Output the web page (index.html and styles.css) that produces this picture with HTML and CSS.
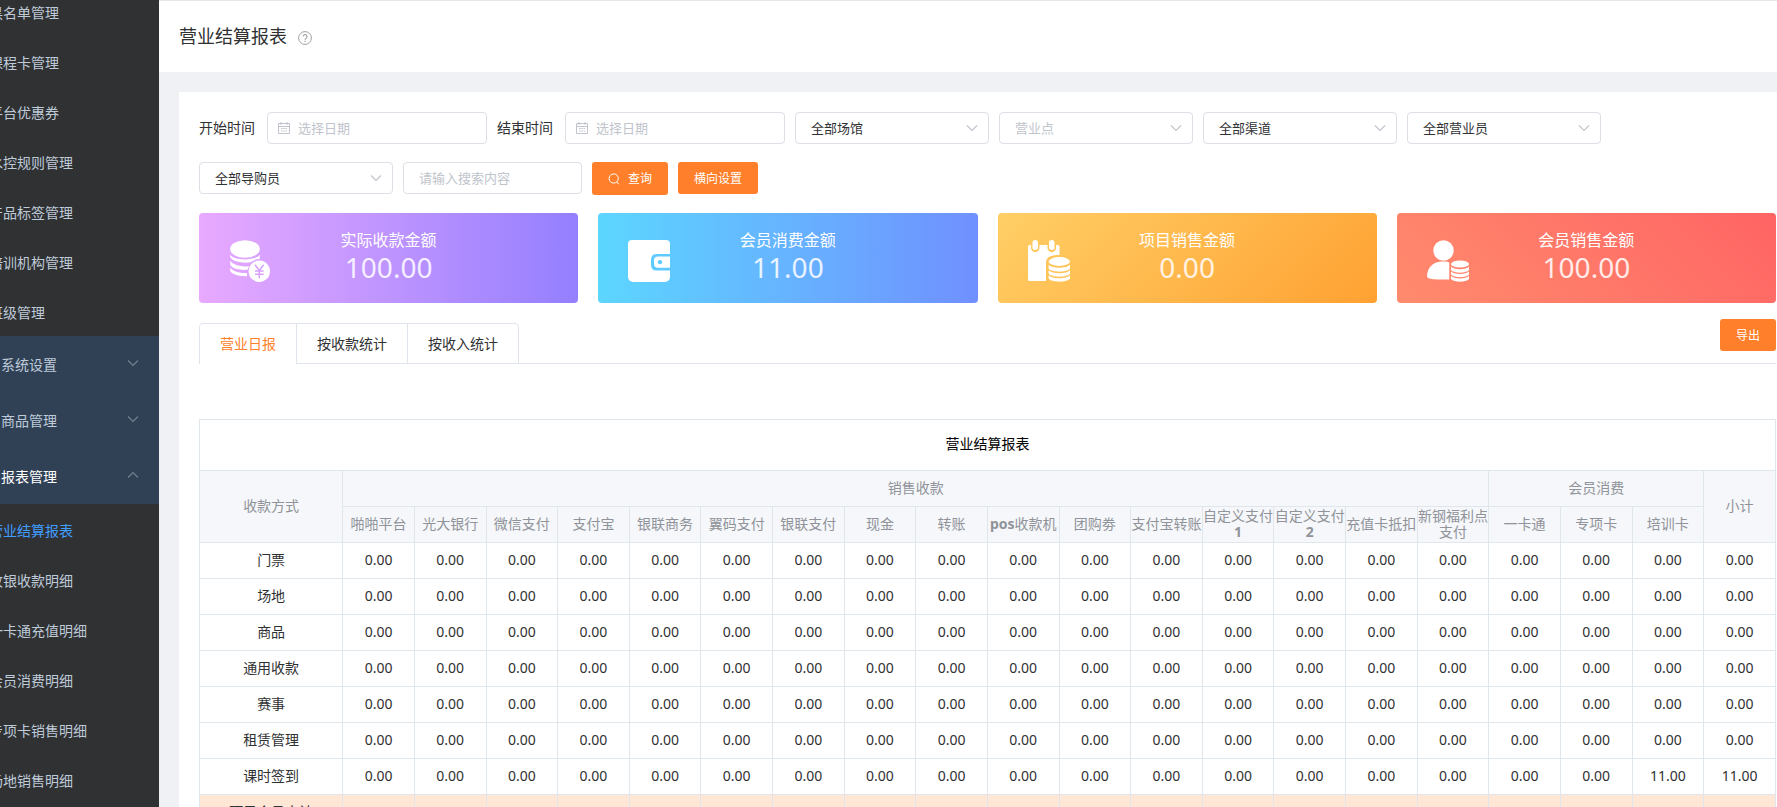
FILE: index.html
```html
<!DOCTYPE html>
<html lang="zh-CN">
<head>
<meta charset="utf-8">
<title>营业结算报表</title>
<link rel="stylesheet" href="styles.css">
</head>
<body>
<svg class="defs" aria-hidden="true">
  <symbol id="chevron" viewBox="0 0 14 14"><path d="M2 4.5l5 5 5-5" fill="none" stroke="currentColor" stroke-width="1.1"/></symbol>
  <symbol id="calendar" viewBox="0 0 14 14"><path d="M1.5 2.5h11v10h-11zM1.5 5.5h11M4 1v3M10 1v3M4 7.5h1.5M6.3 7.5h1.5M8.6 7.5h1.5M4 10h1.5M6.3 10h1.5M8.6 10h1.5" fill="none" stroke="currentColor"/></symbol>
</svg>
<div class="app">
  <nav class="sidebar">
    <ul class="menu">
      <li><a class="sub" href="#">黑名单管理</a></li>
      <li><a class="sub" href="#">课程卡管理</a></li>
      <li><a class="sub" href="#">平台优惠券</a></li>
      <li><a class="sub" href="#">水控规则管理</a></li>
      <li><a class="sub" href="#">产品标签管理</a></li>
      <li><a class="sub" href="#">培训机构管理</a></li>
      <li><a class="sub" href="#">班级管理</a></li>
      <li><button type="button" class="group"><span>系统设置</span><svg><use href="#chevron"/></svg></button></li>
      <li><button type="button" class="group"><span>商品管理</span><svg><use href="#chevron"/></svg></button></li>
      <li><button type="button" class="group open"><span>报表管理</span><svg><use href="#chevron"/></svg></button></li>
      <li><a class="sub active" href="#">营业结算报表</a></li>
      <li><a class="sub" href="#">收银收款明细</a></li>
      <li><a class="sub" href="#">一卡通充值明细</a></li>
      <li><a class="sub" href="#">会员消费明细</a></li>
      <li><a class="sub" href="#">专项卡销售明细</a></li>
      <li><a class="sub" href="#">场地销售明细</a></li>
    </ul>
  </nav>
  <main class="main">
    <header class="page-head">
      <h1>营业结算报表</h1>
      <svg class="help" viewBox="0 0 14 14"><circle cx="7" cy="7" r="6.4" fill="none" stroke="currentColor"/><path d="M5 5.6a2 2 0 1 1 3.2 1.6c-.8.5-1.2.8-1.2 1.6M7 9.8v1.1" fill="none" stroke="currentColor" stroke-width="1.1"/></svg>
    </header>
    <section class="panel">
      <form class="filters">
        <div class="date-field">
          <label for="start">开始时间</label>
          <div class="control date"><svg><use href="#calendar"/></svg><input id="start" type="text" placeholder="选择日期"></div>
        </div>
        <div class="date-field">
          <label for="end">结束时间</label>
          <div class="control date"><svg><use href="#calendar"/></svg><input id="end" type="text" placeholder="选择日期"></div>
        </div>
        <div class="control pick"><select aria-label="场馆"><option>全部场馆</option></select><svg><use href="#chevron"/></svg></div>
        <div class="control pick empty"><select aria-label="营业点"><option>营业点</option></select><svg><use href="#chevron"/></svg></div>
        <div class="control pick"><select aria-label="渠道"><option>全部渠道</option></select><svg><use href="#chevron"/></svg></div>
        <div class="control pick"><select aria-label="营业员"><option>全部营业员</option></select><svg><use href="#chevron"/></svg></div>
        <div class="control pick"><select aria-label="导购员"><option>全部导购员</option></select><svg><use href="#chevron"/></svg></div>
        <div class="control search"><input type="text" aria-label="搜索内容" placeholder="请输入搜索内容"></div>
        <button type="button" class="btn query"><svg viewBox="0 0 12 12"><circle cx="5.7" cy="5.5" r="4.6" fill="none" stroke="currentColor"/><path d="M8.8 9l2 2.3" stroke="currentColor"/></svg>查询</button>
        <button type="button" class="btn">横向设置</button>
      </form>

      <div class="stats">
        <article class="stat violet">
          <svg viewBox="0 0 42 42"><g fill="currentColor"><ellipse cx="16" cy="9" rx="14.8" ry="8.8"/><path d="M1.2 14.5c3 6.5 26.6 6.5 29.6 0v4.2c-3.5.3-6.5 1.600-9 3.600-9 1.200-18.500-.8-20.600-5.300z"/><path d="M1.200 20.800c3 4.300 11 6.200 18.800 5.400l-1.500 3.600c-9 .5-16-1.500-17.300-5.300z"/><path d="M1.200 27.800c3 3.900 9.500 5.500 16.700 5.200l.2 3.200c-9 .3-16.200-2.200-16.900-5.400z"/><circle cx="30.300" cy="31.300" r="10.700"/></g><path d="M26 24.800l4.300 5.700 4.300-5.700M30.300 30.500v7.800M26 31h8.600M26 34.300h8.600" fill="none" stroke="#d8a0ff" stroke-width="1.500"/></svg>
          <h2>实际收款金额</h2><p>100.00</p>
        </article>
        <article class="stat blue">
          <svg viewBox="0 0 42 42"><path fill="currentColor" d="M4 0h34a4 4 0 0 1 4 4v10H28.500q-5.500 0-5.500 6v5q0 5.500 5.500 5.500H42V37a5 5 0 0 1-5 5H5a5 5 0 0 1-5-5V4a4 4 0 0 1 4-4zM42 16.500v11.200H30q-4 0-4-4v-3.200q0-4 4-4zM32 19.900a2.200 2.200 0 1 0 .01 0z" fill-rule="evenodd"/></svg>
          <h2>会员消费金额</h2><p>11.00</p>
        </article>
        <article class="stat amber">
          <svg viewBox="0 0 42 42"><g fill="currentColor"><rect x="4.500" width="5.500" height="10" rx="2.700"/><rect x="21" width="5.500" height="10" rx="2.700"/><path d="M1.500 5H3v3c0 5.500 8.500 5.500 8.500 0V5h8v3c0 5.500 8.500 5.500 8.500 0V5h2q1.500 0 1.500 1.500V15c-9 0-13.500 2-13.500 8v18H1.500Q0 41 0 39.500v-33Q0 5 1.500 5z"/><ellipse cx="31.300" cy="21.500" rx="10.700" ry="4.400"/><path d="M20.600 24.500c3 4.300 18.400 4.300 21.400 0v4c-3 4.200-18.400 4.200-21.400 0zM20.600 30c3 4.300 18.400 4.300 21.400 0v3.500c-3 4.200-18.400 4.200-21.400 0zM20.600 35c3 4.300 18.400 4.300 21.400 0v3.500c-3 4.200-18.400 4.200-21.400 0z"/></g></svg>
          <h2>项目销售金额</h2><p>0.00</p>
        </article>
        <article class="stat coral">
          <svg viewBox="0 0 42 42"><g fill="currentColor"><circle cx="16.500" cy="10.500" r="10.200"/><path d="M22.300 22.500v17H12Q0 39.500 0 36.500C0 28 6 21.800 14 21.500h5.500z"/><ellipse cx="33" cy="24" rx="9" ry="3.600"/><path d="M24 26.600c3 3.500 15 3.500 18 0v3.400c-3 3.500-15 3.500-18 0zM24 31.300c3 3.500 15 3.500 18 0v3.200c-3 3.500-15 3.500-18 0zM24 35.800c3 3.500 15 3.500 18 0v3.200c-3 3.500-15 3.500-18 0z"/></g></svg>
          <h2>会员销售金额</h2><p>100.00</p>
        </article>
      </div>

      <div class="tab-bar">
        <div class="tabs" role="tablist">
          <button type="button" role="tab" class="tab current" aria-selected="true">营业日报</button>
          <button type="button" role="tab" class="tab">按收款统计</button>
          <button type="button" role="tab" class="tab">按收入统计</button>
        </div>
        <button type="button" class="btn">导出</button>
      </div>

      <table class="report">
        <colgroup><col class="col-name"><col span="20"></colgroup>
        <thead>
          <tr class="title"><td colspan="21">营业结算报表</td></tr>
          <tr><th rowspan="2">收款方式</th><th colspan="16">销售收款</th><th colspan="3">会员消费</th><th rowspan="2">小计</th></tr>
          <tr><th>啪啪平台</th><th>光大银行</th><th>微信支付</th><th>支付宝</th><th>银联商务</th><th>翼码支付</th><th>银联支付</th><th>现金</th><th>转账</th><th><b>pos</b>收款机</th><th>团购劵</th><th>支付宝转账</th><th>自定义支付<b>1</b></th><th>自定义支付<b>2</b></th><th>充值卡抵扣</th><th>新钢福利点支付</th><th>一卡通</th><th>专项卡</th><th>培训卡</th></tr>
        </thead>
        <tbody>
          <tr><td>门票</td><td>0.00</td><td>0.00</td><td>0.00</td><td>0.00</td><td>0.00</td><td>0.00</td><td>0.00</td><td>0.00</td><td>0.00</td><td>0.00</td><td>0.00</td><td>0.00</td><td>0.00</td><td>0.00</td><td>0.00</td><td>0.00</td><td>0.00</td><td>0.00</td><td>0.00</td><td>0.00</td></tr>
          <tr><td>场地</td><td>0.00</td><td>0.00</td><td>0.00</td><td>0.00</td><td>0.00</td><td>0.00</td><td>0.00</td><td>0.00</td><td>0.00</td><td>0.00</td><td>0.00</td><td>0.00</td><td>0.00</td><td>0.00</td><td>0.00</td><td>0.00</td><td>0.00</td><td>0.00</td><td>0.00</td><td>0.00</td></tr>
          <tr><td>商品</td><td>0.00</td><td>0.00</td><td>0.00</td><td>0.00</td><td>0.00</td><td>0.00</td><td>0.00</td><td>0.00</td><td>0.00</td><td>0.00</td><td>0.00</td><td>0.00</td><td>0.00</td><td>0.00</td><td>0.00</td><td>0.00</td><td>0.00</td><td>0.00</td><td>0.00</td><td>0.00</td></tr>
          <tr><td>通用收款</td><td>0.00</td><td>0.00</td><td>0.00</td><td>0.00</td><td>0.00</td><td>0.00</td><td>0.00</td><td>0.00</td><td>0.00</td><td>0.00</td><td>0.00</td><td>0.00</td><td>0.00</td><td>0.00</td><td>0.00</td><td>0.00</td><td>0.00</td><td>0.00</td><td>0.00</td><td>0.00</td></tr>
          <tr><td>赛事</td><td>0.00</td><td>0.00</td><td>0.00</td><td>0.00</td><td>0.00</td><td>0.00</td><td>0.00</td><td>0.00</td><td>0.00</td><td>0.00</td><td>0.00</td><td>0.00</td><td>0.00</td><td>0.00</td><td>0.00</td><td>0.00</td><td>0.00</td><td>0.00</td><td>0.00</td><td>0.00</td></tr>
          <tr><td>租赁管理</td><td>0.00</td><td>0.00</td><td>0.00</td><td>0.00</td><td>0.00</td><td>0.00</td><td>0.00</td><td>0.00</td><td>0.00</td><td>0.00</td><td>0.00</td><td>0.00</td><td>0.00</td><td>0.00</td><td>0.00</td><td>0.00</td><td>0.00</td><td>0.00</td><td>0.00</td><td>0.00</td></tr>
          <tr><td>课时签到</td><td>0.00</td><td>0.00</td><td>0.00</td><td>0.00</td><td>0.00</td><td>0.00</td><td>0.00</td><td>0.00</td><td>0.00</td><td>0.00</td><td>0.00</td><td>0.00</td><td>0.00</td><td>0.00</td><td>0.00</td><td>0.00</td><td>0.00</td><td>0.00</td><td>11.00</td><td>11.00</td></tr>
          <tr class="sum"><td>项目会员小计</td><td></td><td></td><td></td><td></td><td></td><td></td><td></td><td></td><td></td><td></td><td></td><td></td><td></td><td></td><td></td><td></td><td></td><td></td><td></td><td></td></tr>
        </tbody>
      </table>
    </section>
  </main>
</div>
</body>
</html>
```
FILE: styles.css
```css
* { box-sizing: border-box; }

body {
  margin: 0;
  background: #f0f1f5;
  color: #303133;
  font: 14px/20px "Noto Sans", "Noto Sans CJK SC", sans-serif;
}

button, input, select { font-family: inherit; color: inherit; margin: 0; }
button { border: 0; background: none; cursor: pointer; }
h1, h2, p, ul { margin: 0; padding: 0; font-weight: 400; }
.defs { display: none; }

.app { display: flex; height: 100vh; overflow: hidden; }

/* Sidebar, scrolled part-way through the menu */
.sidebar { flex: 0 0 159px; overflow: hidden; background: #303133; }
.menu { list-style: none; margin-top: -14px; }
.sub {
  display: block;
  height: 50px;
  line-height: 54px;
  text-indent: -11px;
  white-space: nowrap;
  color: #bfcbd9;
  text-decoration: none;
}
.sub.active { color: #409eff; }
.group {
  display: flex;
  align-items: center;
  justify-content: space-between;
  width: 100%;
  height: 56px;
  padding: 2px 19px 0 1px;
  background: #304156;
  color: #bfcbd9;
  font-size: 14px;
  line-height: 20px;
}
.group svg { width: 14px; height: 14px; margin-bottom: 4px; color: #74808f; }
.group.open { color: #fff; }
.group.open svg { transform: rotate(180deg); }

.main { flex: 1; min-width: 0; }
.page-head {
  display: flex;
  align-items: center;
  gap: 11px;
  height: 72px;
  padding: 0 0 2px 20px;
  border-top: 1px solid #e6e6e6;
  background: #fff;
}
.page-head h1 { font-size: 18px; line-height: 24px; }
.help { width: 14px; height: 14px; margin-top: 4px; color: #a0a0a0; }

.panel { margin: 20px 0 0 20px; padding: 20px 1px 20px 20px; background: #fff; }

/* Filters */
.filters { display: flex; flex-wrap: wrap; align-items: flex-start; gap: 18px 10px; margin-bottom: 18px; }
.date-field { display: flex; align-items: center; gap: 12px; }
.control { position: relative; height: 32px; }
.control.date { width: 220px; }
.control.pick { width: 194px; }
.control.search { width: 179px; }
.control input, .control select {
  width: 100%;
  height: 32px;
  border: 1px solid #dcdfe6;
  border-radius: 4px;
  background: #fff;
  padding: 0 15px;
  font-size: 13px;
  appearance: none;
}
.control.date input { padding-left: 30px; }
.control input::placeholder { color: #c0c4cc; opacity: 1; }
.control.empty select { color: #c0c4cc; }
.control svg { position: absolute; top: 9px; width: 14px; height: 14px; color: #c0c4cc; pointer-events: none; }
.date svg { left: 10px; }
.pick svg { right: 10px; }

.btn {
  display: flex;
  align-items: center;
  justify-content: center;
  height: 32px;
  padding: 2px 16px 0;
  border-radius: 3px;
  background: #ff7f2a;
  color: #fff;
  font-size: 12px;
  line-height: 16px;
}
.btn.query { gap: 8px; height: 33px; padding-top: 0; }
.btn.query svg { width: 12px; height: 12px; }

/* Summary cards */
.stats { display: grid; grid-template-columns: repeat(4, 1fr); gap: 20px; margin-bottom: 16px; }
.stat { position: relative; height: 90px; padding-top: 15px; border-radius: 4px; color: #fff; text-align: center; }
.stat svg { position: absolute; left: 30px; top: 27px; width: 42px; height: 42px; }
.stat h2 { font-size: 16px; line-height: 24px; }
.stat p { font-size: 28px; line-height: 30px; opacity: .85; }
.violet { background: linear-gradient(90deg, #e8a9ff, #947fff); }
.blue { background: linear-gradient(90deg, #5cd6ff, #7090ff); }
.amber { background: linear-gradient(135deg, #ffcf66, #ffa132); }
.coral { background: linear-gradient(45deg, #ff8b6d, #ff6464); }

/* Tabs */
.tab-bar {
  display: flex;
  justify-content: space-between;
  align-items: flex-start;
  margin-bottom: 55px;
  border-bottom: 1px solid #dfe4ed;
}
.tabs {
  display: flex;
  margin: 4px 0 -1px;
  border: 1px solid #dfe4ed;
  border-radius: 4px 4px 0 0;
}
.tab { height: 39px; padding: 0 20px; border-left: 1px solid #dfe4ed; font-size: 14px; line-height: 20px; }
.tab.current { height: 40px; margin-bottom: -1px; border-left: 0; background: #fff; border-radius: 4px 0 0 0; color: #ff7f2a; }

/* Report table */
.report { width: 100%; table-layout: fixed; border-collapse: collapse; text-align: center; }
.report .col-name { width: 9.0909%; }
.report th, .report td { height: 36px; padding: 0 0 2px; border: 1px solid #dfe6ec; line-height: 16px; }
.report th { background: #f5f7fa; color: #909399; font-weight: 400; word-break: break-all; }
.report .title td { height: 51px; color: #000; }
.report .sum td { background: #ffe6d5; }
```
